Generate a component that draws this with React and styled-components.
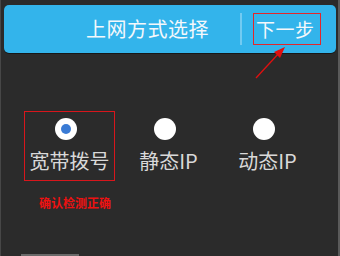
import React, { useState } from "react";
import styled, { createGlobalStyle } from "styled-components";

const GlobalStyle = createGlobalStyle`
  html, body {
    margin: 0;
    padding: 0;
    background: #2b2b2b;
  }
`;

const options = [
  { id: "pppoe", label: "宽带拨号" },
  { id: "static", label: "静态IP" },
  { id: "dhcp", label: "动态IP" },
];

const App = () => {
  const [selected, setSelected] = useState("pppoe"); // 当前选中的上网方式

  return (
    <>
      <GlobalStyle />
      <Screen>
        <Header>
          <Title>上网方式选择</Title>
          <Divider />
          <NextButton>下一步</NextButton>
        </Header>

        <OptionRow>
          {options.map((opt) => (
            <Option
              key={opt.id}
              $marked={opt.id === "pppoe"}
              onClick={() => setSelected(opt.id)}
            >
              <Radio $checked={selected === opt.id} />
              <Label>{opt.label}</Label>
            </Option>
          ))}
        </OptionRow>

        <Note>确认检测正确</Note>
        <BottomBar />

        {/* 标注箭头 */}
        <Arrow width="40" height="40" viewBox="0 0 40 40">
          <line x1="4" y1="34" x2="28" y2="8" stroke="#e01010" strokeWidth="1.3" />
          <polygon points="33,3 22,8 28,14" fill="#e01010" />
        </Arrow>
      </Screen>
    </>
  );
};

export default App;

const Screen = styled.div`
  position: relative;
  box-sizing: border-box;
  width: 340px;
  height: 256px;
  padding-top: 5px;
  background: #2b2b2b;
  border-left: 1px solid #474747;
  border-right: 2px solid #5a5a5a;
  font-family: "Noto Sans CJK SC", "Noto Sans", sans-serif;
  overflow: hidden;
`;

const Header = styled.div`
  display: flex;
  align-items: center;
  box-sizing: border-box;
  height: 48px;
  margin: 0 2px 0 3px;
  padding-left: 82px;
  background: #33b4eb;
  border-radius: 5px;
  box-shadow: 0 1px 0 rgba(0, 0, 0, 0.45);
`;

const Title = styled.div`
  color: #f4f8fb;
  font-size: 20px;
  line-height: 24px;
  letter-spacing: 0.5px;
`;

const Divider = styled.div`
  width: 2px;
  height: 32px;
  margin-left: 31px;
  background: #72cbf2;
`;

const NextButton = styled.div`
  box-sizing: border-box;
  height: 32px;
  margin-left: 11px;
  padding: 0 5px 0 2px;
  border: 1.5px solid #e3262a;
  color: #f4f8fb;
  font-size: 19px;
  line-height: 29px;
  letter-spacing: 0.5px;
  cursor: pointer;
`;

const OptionRow = styled.div`
  display: flex;
  gap: 8px;
  margin-top: 58px;
  padding-left: 23px;
`;

const Option = styled.div`
  display: flex;
  flex-direction: column;
  align-items: center;
  box-sizing: border-box;
  width: 91px;
  height: 70px;
  padding-top: 6px;
  border: 1.5px solid ${(p) => (p.$marked ? "#d8161c" : "transparent")};
  cursor: pointer;
`;

const Radio = styled.span`
  position: relative;
  width: 22px;
  height: 22px;
  margin-left: -8px;
  border-radius: 50%;
  background: #ffffff;

  &::after {
    content: "";
    position: absolute;
    top: 6px;
    left: 6px;
    width: 10px;
    height: 10px;
    border-radius: 50%;
    background: #3a7bd5;
    display: ${(p) => (p.$checked ? "block" : "none")};
  }
`;

const Label = styled.div`
  margin-top: 9px;
  color: #d9d9d9;
  font-size: 20px;
  line-height: 24px;
  white-space: nowrap;
`;

const Note = styled.div`
  margin: 14px 0 0 38px;
  color: #ee1111;
  font-size: 12px;
  font-weight: 700;
  line-height: 16px;
`;

const BottomBar = styled.div`
  position: absolute;
  left: 20px;
  bottom: 0;
  width: 58px;
  height: 2px;
  background: #6a6a6a;
`;

const Arrow = styled.svg`
  position: absolute;
  left: 251px;
  top: 44px;
`;
